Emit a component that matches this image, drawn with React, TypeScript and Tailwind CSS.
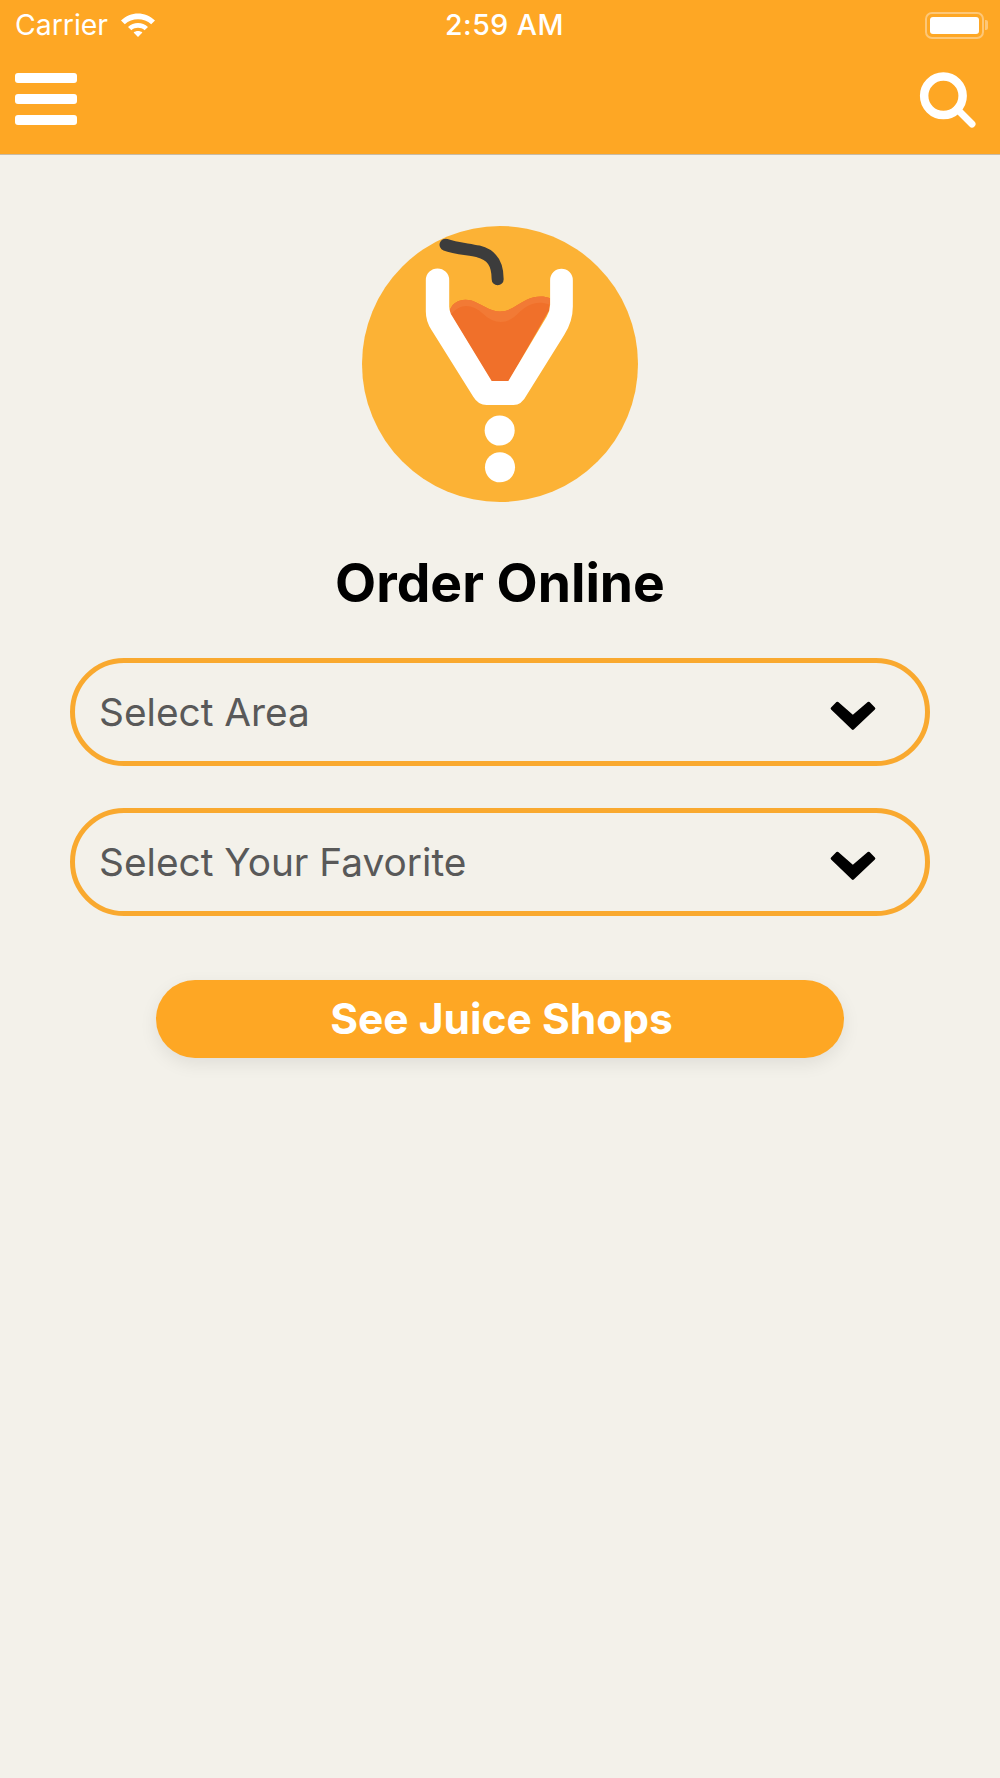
import React from "react";

const font = { fontFamily: '"Inter", "Liberation Sans", sans-serif' };

function Wifi() {
  return (
    <svg width="36" height="26" viewBox="0 0 36 26" className="ml-[12px]">
      <path d="M1 8.5C10.5 -1 25.5 -1 35 8.5L31.2 12.3C24 5.5 12 5.5 4.8 12.3Z" fill="#fff" />
      <path d="M8 15C13.5 9.8 22.5 9.8 28 15L24.6 18.2C20.8 15 15.2 15 11.4 18.2Z" fill="#fff" />
      <path d="M13.6 20.6C16 18.6 20 18.6 22.4 20.6L18 25Z" fill="#fff" />
    </svg>
  );
}

function Battery() {
  return (
    <div className="flex items-center">
      <div className="w-[59px] h-[27px] rounded-[7px] border-2 border-[#fdc778] p-[3px]">
        <div className="w-full h-full rounded-[3px] bg-white" />
      </div>
      <div className="w-[3px] h-[10px] ml-[1px] rounded-r-[2px] bg-[#fdc778]" />
    </div>
  );
}

function Search() {
  return (
    <svg width="60" height="60" viewBox="0 0 60 60">
      <circle cx="27.4" cy="23.8" r="19.25" fill="none" stroke="#fff" strokeWidth="8.5" />
      <path d="M41 37L56 52" stroke="#fff" strokeWidth="7" strokeLinecap="round" />
    </svg>
  );
}

function Logo() {
  return (
    <svg width="276" height="276" viewBox="37 49 826 826">
      <circle cx="450" cy="462" r="413" fill="#fcb235" />
      <path d="M300 300C310 275 335 264 365 272C395 282 420 305 450 305C480 305 500 285 530 270C555 258 580 258 600 265L598 300L475 515H425L302 312Z" fill="#f0702a" />
      <path d="M300 300C310 275 335 264 365 272C395 282 420 305 450 305C480 305 500 285 530 270C555 258 580 258 600 265L598 285C560 270 535 285 510 305C475 345 435 345 400 312C365 280 330 280 302 315Z" fill="#f27a35" />
      <path d="M228 211A35 35 0 0 1 298 211V290Q298 302 303 312L425 513H475L590 320Q600 302 600 285V211A34 34 0 0 1 668 211V290Q668 335 642 375L530 555Q515 585 490 585H410Q385 585 370 560L245 360Q228 335 228 305Z" fill="#fff" />
      <path d="M287 105C315 115 350 118 385 125C425 135 443 160 443 208" fill="none" stroke="#3c3c3c" strokeWidth="36" strokeLinecap="round" />
      <circle cx="449" cy="661" r="45" fill="#fff" />
      <circle cx="450" cy="771" r="45" fill="#fff" />
    </svg>
  );
}

function Chevron() {
  return (
    <svg width="46" height="30" viewBox="690 183 137 89" className="mt-[8px]">
      <polygon points="696,205 712,189 758,229 805,189 821,205 758,265" fill="#000" stroke="#000" strokeWidth="8" strokeLinejoin="round" />
    </svg>
  );
}

function Select({ label }: { label: string }) {
  return (
    <div className="h-[108px] rounded-[54px] border-[5px] border-[#f9a92f] flex items-center justify-between pl-[24px] pr-[49px]">
      <span className="text-[38.8px] leading-none text-[#595959]">{label}</span>
      <Chevron />
    </div>
  );
}

export default function App() {
  return (
    <div className="min-h-[1778px] bg-[#f3f1ea] flex flex-col" style={font}>
      <header className="h-[155px] bg-[#fea724] border-b border-[#c8bba6] text-white">
        <div className="h-[50px] relative flex items-center justify-between pl-[15px] pr-[12px]">
          <div className="flex items-center">
            <span className="text-[28.4px] leading-none">Carrier</span>
            <Wifi />
          </div>
          <span className="absolute left-[9px] right-0 text-center text-[28.5px] tracking-[0.5px] leading-none font-medium">2:59 AM</span>
          <Battery />
        </div>
        <div className="flex items-start justify-between pl-[15px] pr-[24px] pt-[23px]">
          <div className="flex flex-col gap-[11px]">
            <div className="w-[62px] h-[10px] rounded-[3px] bg-white" />
            <div className="w-[62px] h-[10px] rounded-[3px] bg-white" />
            <div className="w-[62px] h-[10px] rounded-[3px] bg-white" />
          </div>
          <div className="mt-[-1px]"><Search /></div>
        </div>
      </header>
      <main className="flex flex-col items-center pt-[71px]">
        <Logo />
        <h1 className="mt-[51px] mb-[1px] text-[53.4px] leading-[60px] font-bold text-black">Order Online</h1>
        <div className="mt-[44px] w-[860px] flex flex-col gap-[42px]">
          <Select label="Select Area" />
          <Select label="Select Your Favorite" />
        </div>
        <button className="mt-[64px] w-[688px] h-[78px] rounded-[39px] bg-[#fea724] pl-[3px] text-white text-[42.5px] leading-none font-bold shadow-[0_6px_18px_rgba(0,0,0,0.08)]">
          See Juice Shops
        </button>
      </main>
    </div>
  );
}
